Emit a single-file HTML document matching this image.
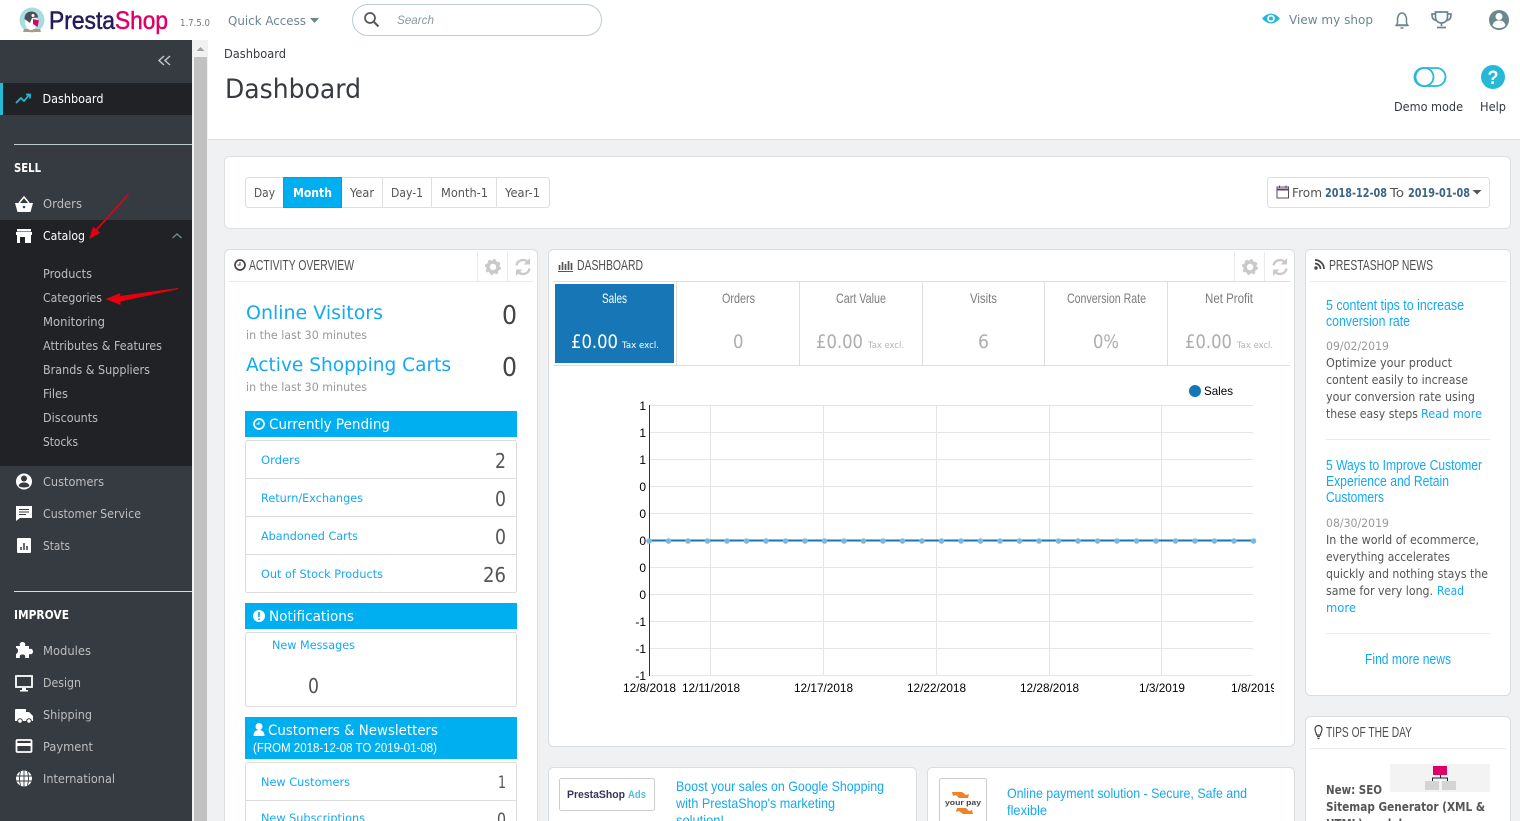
<!DOCTYPE html>
<html lang="en"><head><meta charset="utf-8"><title>Dashboard</title>
<style>
html,body{margin:0;padding:0;width:1520px;height:821px;overflow:hidden;background:#eff1f2}
svg{display:block;position:absolute;left:0;top:0}
text{white-space:pre}
.o{font-family:"DejaVu Sans",sans-serif}
.n{font-family:"Liberation Sans",sans-serif}
.s{fill:#bebebe;font-size:12px}
.w{fill:#fff;font-size:12px}
.sub{fill:#bebebe;font-size:12px}
.h{fill:#4f4f4f;font-size:15px}
.l{fill:#14a9f0}
.tl{fill:#7d7d7d;font-size:14px}
.big{fill:#aeaeae;font-size:19px}
.tx{fill:#b5b5b5;font-size:9px}
.b{fill:#555;font-size:12px}
.ax{fill:#000;font-size:12px}
</style></head><body>
<svg width="1520" height="821" viewBox="0 0 1520 821" xmlns="http://www.w3.org/2000/svg">
<rect width="1520" height="821" fill="#eff1f2"/>
<!-- top header -->
<rect width="1520" height="40" fill="#fff"/>
<circle cx="32" cy="20" r="12.500" fill="#a9dbe3"/>
<path d="M23 32l1-3h16l1 3z" fill="#a89a84"/>
<ellipse cx="31" cy="22" rx="6" ry="8" fill="#fff"/>
<path d="M24.500 19c0-5 3-7.500 7-7.500s6.500 2.500 6.500 6l-6 0.500-2 5z" fill="#4b4f58"/>
<circle cx="33" cy="15.500" r="1.500" fill="#fff"/>
<path d="M33 19l6 1.500-1.500 6.500-4.500-3z" fill="#df0067"/>
<text class="n" x="49" y="29" font-size="25" font-weight="400" fill="#251b5b" stroke="#251b5b" stroke-width=".5" textLength="66" lengthAdjust="spacingAndGlyphs">Presta</text>
<text class="n" x="115" y="29" font-size="25" font-weight="400" fill="#df0067" stroke="#df0067" stroke-width=".5" textLength="53" lengthAdjust="spacingAndGlyphs">Shop</text>
<text class="o" x="180" y="26" font-size="10" fill="#777" textLength="30" lengthAdjust="spacingAndGlyphs">1.7.5.0</text>
<text class="o" x="228" y="25" font-size="12.500" fill="#6c868e" textLength="78" lengthAdjust="spacingAndGlyphs">Quick Access</text>
<path d="M310 18h9l-4.500 5z" fill="#6c868e"/>
<rect x="352.500" y="4.500" width="249" height="31" rx="15.500" fill="#fff" stroke="#bbcdd2"/>
<circle cx="370" cy="18" r="5" fill="none" stroke="#555" stroke-width="1.700"/><path d="M374 22l4.500 4.500" stroke="#555" stroke-width="2"/>
<text class="n" x="397" y="24" font-size="12" font-style="italic" fill="#8a9aa0" textLength="37" lengthAdjust="spacingAndGlyphs">Search</text>
<path d="M1262 18.500q9-10 18 0q-9 10-18 0z" fill="#25b9d7"/><circle cx="1271" cy="18.500" r="3.800" fill="#fff"/><circle cx="1271" cy="18.500" r="2" fill="#25b9d7"/>
<text class="o" x="1289" y="24" font-size="12.500" fill="#6c868e" textLength="84" lengthAdjust="spacingAndGlyphs">View my shop</text>
<path d="M1396.500 25c1.500-1.500 1-3 1-6c0-3 2-6 4.500-6s4.500 3 4.500 6c0 3-.5 4.500 1 6z" fill="none" stroke="#6c868e" stroke-width="1.500"/><path d="M1395.500 25.500h13M1400.500 28h3" stroke="#6c868e" stroke-width="1.500"/>
<path d="M1435.500 12h12v5c0 4-3 6-6 6s-6-2-6-6zM1435.500 14h-3.500c0 4 1 6 4.500 6.500M1447.500 14h3.500c0 4-1 6-4.500 6.500M1441.500 23v3M1437 27.500h9" fill="none" stroke="#6c868e" stroke-width="1.700"/>
<circle cx="1499" cy="20" r="10" fill="#6c868e"/><circle cx="1499" cy="16.500" r="3.500" fill="#fff"/><path d="M1492.500 25.500c1-4 3.500-5 6.500-5s5.500 1 6.500 5c-3 3.500-10 3.500-13 0z" fill="#fff"/>
<!-- sidebar -->
<rect y="40" width="192" height="781" fill="#363a41"/>
<rect x="192" y="40" width="16" height="781" fill="#f1f1f1"/>
<rect x="194" y="57" width="13" height="764" fill="#c1c1c1"/>
<path d="M200.500 47l4 4h-8z" fill="#a3a3a3"/>
<path d="M164 56l-5 4.500 5 4.500M170 56l-5 4.500 5 4.500" fill="none" stroke="#bcc5c9" stroke-width="1.500"/>
<rect y="83" width="192" height="32" fill="#202226"/><rect y="83" width="3" height="32" fill="#25b9d7"/>
<path d="M16 103l5-5 3 3 5-6M26 94.500h4v4" fill="none" stroke="#25b9d7" stroke-width="1.700"/>
<text class="o w" x="42.500" y="103" textLength="61" lengthAdjust="spacingAndGlyphs">Dashboard</text>
<rect x="14" y="144" width="178" height="1" fill="#bbcdd2"/>
<text class="o" x="14" y="172" font-size="12" font-weight="700" fill="#fff" textLength="27" lengthAdjust="spacingAndGlyphs">SELL</text>
<path d="M15 203h18l-2.500 9h-13z" fill="#fff"/><path d="M19 203l5-6 5 6" fill="none" stroke="#fff" stroke-width="1.500"/><circle cx="24" cy="207" r="1.300" fill="#25488c"/>
<text class="o s" x="43" y="208" textLength="39" lengthAdjust="spacingAndGlyphs">Orders</text>
<rect y="220" width="192" height="246" fill="#202226"/>
<path d="M17 229h14v2.500H17zM16 232h16v3H16zM17 235h14v8H17z" fill="#fff"/><rect x="20" y="237" width="5" height="6" fill="#202226"/>
<text class="o w" x="43" y="240" textLength="42" lengthAdjust="spacingAndGlyphs">Catalog</text>
<path d="M172.500 238l4.500-4 4.500 4" fill="none" stroke="#6c868e" stroke-width="1.500"/>
<text class="o sub" x="43" y="278" textLength="49" lengthAdjust="spacingAndGlyphs">Products</text>
<text class="o sub" x="43" y="302" textLength="59" lengthAdjust="spacingAndGlyphs">Categories</text>
<text class="o sub" x="43" y="326" textLength="62" lengthAdjust="spacingAndGlyphs">Monitoring</text>
<text class="o sub" x="43" y="350" textLength="119" lengthAdjust="spacingAndGlyphs">Attributes &amp; Features</text>
<text class="o sub" x="43" y="374" textLength="107" lengthAdjust="spacingAndGlyphs">Brands &amp; Suppliers</text>
<text class="o sub" x="43" y="398" textLength="25" lengthAdjust="spacingAndGlyphs">Files</text>
<text class="o sub" x="43" y="422" textLength="55" lengthAdjust="spacingAndGlyphs">Discounts</text>
<text class="o sub" x="43" y="446" textLength="35" lengthAdjust="spacingAndGlyphs">Stocks</text>
<path d="M128 194L96 229l-3-2-4 12 11-6-2.500-3L129 195z" fill="#e6000f"/>
<path d="M178 288l-58 8 .5-3-15 6 15 6 0-3.500 58-12.500z" fill="#e6000f"/>
<circle cx="24" cy="481.500" r="8" fill="#fff"/><circle cx="24" cy="478.500" r="3" fill="#363a41"/><path d="M18.500 486c1-3 3-3.500 5.500-3.500s4.500.5 5.500 3.500c-2 2-9 2-11 0z" fill="#363a41"/>
<text class="o s" x="43" y="486" textLength="61" lengthAdjust="spacingAndGlyphs">Customers</text>
<path d="M16 506h16v12H20l-4 3z" fill="#fff"/><path d="M19 509.500h10M19 512h10M19 514.500h7" stroke="#363a41" stroke-width="1"/>
<text class="o s" x="43" y="518" textLength="98" lengthAdjust="spacingAndGlyphs">Customer Service</text>
<rect x="17" y="538" width="14" height="15" rx="1" fill="#fff"/><path d="M21 550v-3M24 550v-7M27 550v-4" stroke="#363a41" stroke-width="1.500"/>
<text class="o s" x="43" y="550" textLength="27" lengthAdjust="spacingAndGlyphs">Stats</text>
<rect x="14" y="591" width="178" height="1" fill="#d5dadc"/>
<text class="o" x="14" y="619" font-size="12" font-weight="700" fill="#fff" textLength="55" lengthAdjust="spacingAndGlyphs">IMPROVE</text>
<path d="M16 646h4c-1-3 1-4 2.500-4s3.500 1 2.500 4h4v3c3-1 4 1 4 2.500s-1 3.500-4 2.500v4h-4c1-3-1-3.500-2.500-3.500s-3.500.5-2.500 3.500h-4v-4c2-1 2-2.500 2-3s0-3-2-3z" fill="#fff"/>
<text class="o s" x="43" y="655" textLength="48" lengthAdjust="spacingAndGlyphs">Modules</text>
<rect x="16" y="676" width="16" height="11" fill="#363a41" stroke="#fff" stroke-width="1.800"/><path d="M22 688h4v2h2v1.500h-8V690h2z" fill="#fff"/>
<text class="o s" x="43" y="687" textLength="38" lengthAdjust="spacingAndGlyphs">Design</text>
<path d="M15 710q0-1 1-1h10v3h3l4 4v5H15z" fill="#fff"/><circle cx="20" cy="721" r="2.300" fill="#fff" stroke="#363a41"/><circle cx="29" cy="721" r="2.300" fill="#fff" stroke="#363a41"/>
<text class="o s" x="43" y="719" textLength="49" lengthAdjust="spacingAndGlyphs">Shipping</text>
<rect x="16.500" y="740" width="15" height="12" rx="1" fill="#363a41" stroke="#fff" stroke-width="1.800"/><rect x="16" y="743" width="16" height="3" fill="#fff"/>
<text class="o s" x="43" y="751" textLength="50" lengthAdjust="spacingAndGlyphs">Payment</text>
<circle cx="24" cy="778.500" r="8" fill="#fff"/><path d="M16 776h16M16 781h16M24 770.500v16M20.500 771.500q-2 7 0 14M27.500 771.500q2 7 0 14" fill="none" stroke="#363a41" stroke-width=".9"/>
<text class="o s" x="43" y="783" textLength="72" lengthAdjust="spacingAndGlyphs">International</text>
<!-- page head -->
<rect x="208" y="40" width="1312" height="99" fill="#fff"/><rect x="208" y="139" width="1312" height="1" fill="#dcdfe1"/>
<text class="o" x="224" y="58" font-size="12" fill="#363a41" textLength="62" lengthAdjust="spacingAndGlyphs">Dashboard</text>
<text class="o" x="225" y="98" font-size="27" fill="#363a41" textLength="136" lengthAdjust="spacingAndGlyphs">Dashboard</text>
<rect x="1414.500" y="68" width="31" height="18" rx="9" fill="none" stroke="#25b9d7" stroke-width="1.800"/><circle cx="1424.500" cy="77" r="9" fill="#fff" stroke="#25b9d7" stroke-width="1.800"/>
<text class="o" x="1394" y="111" font-size="12" fill="#363a41" textLength="69" lengthAdjust="spacingAndGlyphs">Demo mode</text>
<circle cx="1493" cy="77" r="12" fill="#25b9d7"/>
<text class="n" x="1487.500" y="84" font-size="19" font-weight="700" fill="#fff" textLength="11" lengthAdjust="spacingAndGlyphs">?</text>
<text class="o" x="1480" y="111" font-size="12" fill="#363a41" textLength="26" lengthAdjust="spacingAndGlyphs">Help</text>
<!-- calendar bar -->
<rect x="224.500" y="156.500" width="1286" height="72" rx="5" fill="#fff" stroke="#dbe0e3"/>
<rect x="245.500" y="177.500" width="304" height="30" rx="3" fill="#fff" stroke="#dcdfe1"/>
<path d="M382.500 178v29M431.500 178v29M496.500 178v29" stroke="#dcdfe1"/>
<rect x="283.500" y="177.500" width="58" height="30" fill="#00aff0" stroke="#0d9ccf"/>
<text class="o" x="254" y="197" font-size="12" fill="#555" textLength="21" lengthAdjust="spacingAndGlyphs">Day</text>
<text class="o" x="293" y="197" font-size="12" font-weight="700" fill="#fff" textLength="39" lengthAdjust="spacingAndGlyphs">Month</text>
<text class="o" x="350" y="197" font-size="12" fill="#555" textLength="24" lengthAdjust="spacingAndGlyphs">Year</text>
<text class="o" x="391" y="197" font-size="12" fill="#555" textLength="32" lengthAdjust="spacingAndGlyphs">Day-1</text>
<text class="o" x="441" y="197" font-size="12" fill="#555" textLength="47" lengthAdjust="spacingAndGlyphs">Month-1</text>
<text class="o" x="505" y="197" font-size="12" fill="#555" textLength="35" lengthAdjust="spacingAndGlyphs">Year-1</text>
<rect x="1267.500" y="177.500" width="222" height="30" rx="3" fill="#fff" stroke="#dcdfe1"/>
<rect x="1277" y="187" width="11.500" height="11" fill="#fff" stroke="#5b4468"/><path d="M1277 189.500h11.500" stroke="#5b4468" stroke-width="2"/><path d="M1279.500 185.500v2.500M1286 185.500v2.500" stroke="#5b4468"/>
<text class="o" x="1292" y="197" font-size="12" fill="#555" textLength="30" lengthAdjust="spacingAndGlyphs">From</text>
<text class="o" x="1325" y="197" font-size="12" font-weight="700" fill="#3a6585" textLength="62" lengthAdjust="spacingAndGlyphs">2018-12-08</text>
<text class="o" x="1390" y="197" font-size="12" fill="#555" textLength="14" lengthAdjust="spacingAndGlyphs">To</text>
<text class="o" x="1408" y="197" font-size="12" font-weight="700" fill="#3a6585" textLength="62" lengthAdjust="spacingAndGlyphs">2019-01-08</text>
<path d="M1472.500 190h9l-4.500 4.500z" fill="#555"/>
<!-- activity panel -->
<rect x="224.500" y="249.500" width="313" height="600" rx="5" fill="#fff" stroke="#d9dee1"/>
<path d="M229 281.500h304M477.500 252v29M507.500 252v29" stroke="#eaeaea"/>
<circle cx="240" cy="265" r="5" fill="none" stroke="#444" stroke-width="1.700"/><path d="M240 262v3h-2.500" fill="none" stroke="#444"/>
<text class="n h" x="249" y="270" textLength="105" lengthAdjust="spacingAndGlyphs">ACTIVITY OVERVIEW</text>
<circle cx="493" cy="267" r="5" fill="none" stroke="#c9c9c9" stroke-width="3.500"/><circle cx="493" cy="267" r="7" fill="none" stroke="#c9c9c9" stroke-width="2" stroke-dasharray="2.800 2.700"/>
<path d="M516.500 265.500a6.500 6.500 0 0 1 11.500-3M529.500 268.500a6.500 6.500 0 0 1-11.500 3" fill="none" stroke="#c9c9c9" stroke-width="2.300"/><path d="M530 258v6.500h-6.500zM516 276v-6.500h6.500z" fill="#c9c9c9"/>
<text class="o l" x="246" y="319" font-size="19" textLength="137" lengthAdjust="spacingAndGlyphs">Online Visitors</text>
<text class="o" x="502" y="324" font-size="26" fill="#444" textLength="15" lengthAdjust="spacingAndGlyphs">0</text>
<text class="o" x="246" y="339" font-size="11.500" fill="#999" textLength="121" lengthAdjust="spacingAndGlyphs">in the last 30 minutes</text>
<text class="o l" x="246" y="371" font-size="19" textLength="205" lengthAdjust="spacingAndGlyphs">Active Shopping Carts</text>
<text class="o" x="502" y="376" font-size="26" fill="#444" textLength="15" lengthAdjust="spacingAndGlyphs">0</text>
<text class="o" x="246" y="391" font-size="11.500" fill="#999" textLength="121" lengthAdjust="spacingAndGlyphs">in the last 30 minutes</text>
<rect x="245" y="411" width="272" height="26" fill="#00aff0"/>
<circle cx="259" cy="424" r="5" fill="none" stroke="#fff" stroke-width="1.700"/><path d="M259 421.500v2.500h-2.500" fill="none" stroke="#fff"/>
<text class="o" x="269" y="429" font-size="14.500" fill="#fff" textLength="121" lengthAdjust="spacingAndGlyphs">Currently Pending</text>
<rect x="245.500" y="440.500" width="271" height="152" rx="2" fill="#fff" stroke="#dcdcdc"/>
<path d="M246 478.500h270M246 516.500h270M246 554.500h270" stroke="#dcdcdc"/>
<text class="o l" x="261" y="464" font-size="11.500" textLength="39" lengthAdjust="spacingAndGlyphs">Orders</text>
<text class="o" x="495" y="468" font-size="20" fill="#555" textLength="11" lengthAdjust="spacingAndGlyphs">2</text>
<text class="o l" x="261" y="502" font-size="11.500" textLength="102" lengthAdjust="spacingAndGlyphs">Return/Exchanges</text>
<text class="o" x="495" y="506" font-size="20" fill="#555" textLength="11" lengthAdjust="spacingAndGlyphs">0</text>
<text class="o l" x="261" y="540" font-size="11.500" textLength="97" lengthAdjust="spacingAndGlyphs">Abandoned Carts</text>
<text class="o" x="495" y="544" font-size="20" fill="#555" textLength="11" lengthAdjust="spacingAndGlyphs">0</text>
<text class="o l" x="261" y="578" font-size="11.500" textLength="122" lengthAdjust="spacingAndGlyphs">Out of Stock Products</text>
<text class="o" x="483" y="582" font-size="20" fill="#555" textLength="23" lengthAdjust="spacingAndGlyphs">26</text>
<rect x="245" y="603" width="272" height="26" fill="#00aff0"/>
<circle cx="259" cy="616" r="6" fill="#fff"/><path d="M259 612v5M259 618.500v1.500" stroke="#00aff0" stroke-width="1.700"/>
<text class="o" x="269" y="621" font-size="14.500" fill="#fff" textLength="85" lengthAdjust="spacingAndGlyphs">Notifications</text>
<rect x="245.500" y="632.500" width="271" height="74" rx="2" fill="#fff" stroke="#dcdcdc"/>
<text class="o l" x="272" y="649" font-size="11.500" textLength="83" lengthAdjust="spacingAndGlyphs">New Messages</text>
<text class="o" x="308" y="693" font-size="20" fill="#555" textLength="11" lengthAdjust="spacingAndGlyphs">0</text>
<rect x="245" y="717" width="272" height="42" fill="#00aff0"/>
<circle cx="259" cy="726.500" r="3.500" fill="#fff"/><path d="M253.500 736c0-4 2-6 5.500-6s5.500 2 5.500 6z" fill="#fff"/>
<text class="o" x="268" y="735" font-size="14.500" fill="#fff" textLength="170" lengthAdjust="spacingAndGlyphs">Customers &amp; Newsletters</text>
<text class="n" x="253" y="752" font-size="13" fill="#fff" textLength="184" lengthAdjust="spacingAndGlyphs">(FROM 2018-12-08 TO 2019-01-08)</text>
<rect x="245.500" y="762.500" width="271" height="80" rx="2" fill="#fff" stroke="#dcdcdc"/>
<path d="M246 800.500h270" stroke="#dcdcdc"/>
<text class="o l" x="261" y="786" font-size="11.500" textLength="89" lengthAdjust="spacingAndGlyphs">New Customers</text>
<text class="o" x="498" y="788" font-size="17" fill="#555" textLength="8" lengthAdjust="spacingAndGlyphs">1</text>
<text class="o l" x="261" y="822" font-size="11.500" textLength="104" lengthAdjust="spacingAndGlyphs">New Subscriptions</text>
<text class="o" x="497" y="825" font-size="17" fill="#555" textLength="9" lengthAdjust="spacingAndGlyphs">0</text>
<!-- dashboard panel -->
<rect x="548.500" y="249.500" width="746" height="497" rx="5" fill="#fff" stroke="#d9dee1"/>
<path d="M558 271.500h15" stroke="#555"/><path d="M559.500 270v-5M562.500 270v-8M565.500 270v-6M568.500 270v-9M571.500 270v-7" stroke="#555" stroke-width="1.700"/>
<text class="n h" x="577" y="270" textLength="66" lengthAdjust="spacingAndGlyphs">DASHBOARD</text>
<path d="M1234.500 252v29M1264.500 252v29" stroke="#eaeaea"/>
<circle cx="1250" cy="267" r="5" fill="none" stroke="#c9c9c9" stroke-width="3.500"/><circle cx="1250" cy="267" r="7" fill="none" stroke="#c9c9c9" stroke-width="2" stroke-dasharray="2.800 2.700"/>
<path d="M1273.500 265.500a6.500 6.500 0 0 1 11.500-3M1286.500 268.500a6.500 6.500 0 0 1-11.500 3" fill="none" stroke="#c9c9c9" stroke-width="2.300"/><path d="M1287 258v6.500h-6.500zM1273 276v-6.500h6.500z" fill="#c9c9c9"/>
<path d="M553 281.500h737M553 365.500h737M676.500 282v83M799.500 282v83M922.500 282v83M1044.500 282v83M1167.500 282v83" stroke="#dedede"/>
<rect x="555" y="284" width="119" height="79" fill="#1777b6"/>
<text class="n" x="602" y="303" font-size="14" fill="#fff" textLength="25" lengthAdjust="spacingAndGlyphs">Sales</text>
<text class="o" x="571" y="348" font-size="19" fill="#fff" textLength="47" lengthAdjust="spacingAndGlyphs">£0.00</text>
<text class="o" x="622" y="348" font-size="9" fill="#fff" textLength="37" lengthAdjust="spacingAndGlyphs">Tax excl.</text>
<text class="n tl" x="722" y="303" textLength="33" lengthAdjust="spacingAndGlyphs">Orders</text>
<text class="o big" x="733" y="348" textLength="10.500" lengthAdjust="spacingAndGlyphs">0</text>
<text class="n tl" x="836" y="303" textLength="50" lengthAdjust="spacingAndGlyphs">Cart Value</text>
<text class="o big" x="816" y="348" textLength="47" lengthAdjust="spacingAndGlyphs">£0.00</text>
<text class="o tx" x="868" y="348" textLength="36" lengthAdjust="spacingAndGlyphs">Tax excl.</text>
<text class="n tl" x="970" y="303" textLength="27" lengthAdjust="spacingAndGlyphs">Visits</text>
<text class="o big" x="978" y="348" textLength="11" lengthAdjust="spacingAndGlyphs">6</text>
<text class="n tl" x="1067" y="303" textLength="79" lengthAdjust="spacingAndGlyphs">Conversion Rate</text>
<text class="o big" x="1093" y="348" textLength="26" lengthAdjust="spacingAndGlyphs">0%</text>
<text class="n tl" x="1205" y="303" textLength="48" lengthAdjust="spacingAndGlyphs">Net Profit</text>
<text class="o big" x="1185" y="348" textLength="47" lengthAdjust="spacingAndGlyphs">£0.00</text>
<text class="o tx" x="1237" y="348" textLength="36" lengthAdjust="spacingAndGlyphs">Tax excl.</text>
<circle cx="1195" cy="391" r="6" fill="#1777b6"/>
<text class="n" x="1204" y="395" font-size="12" fill="#000" textLength="29" lengthAdjust="spacingAndGlyphs">Sales</text>
<!-- chart -->
<path d="M650 405.500h603M650 432.500h603M650 459.500h603M650 486.500h603M650 513.500h603M650 567.500h603M650 594.500h603M650 621.500h603M650 648.500h603M650 675.500h603M710.500 405v271M823.500 405v271M936.500 405v271M1049.500 405v271M1161.500 405v271" stroke="#e5e5e5"/>
<path d="M649.500 405v271" stroke="#333"/>
<path d="M650 540.500H1253" stroke="#1777b6" stroke-width="2"/>
<g fill="#7fb6dc">
<circle cx="649" cy="541" r="2.800"/><circle cx="668.500" cy="541" r="2.800"/><circle cx="688" cy="541" r="2.800"/><circle cx="707.500" cy="541" r="2.800"/><circle cx="727" cy="541" r="2.800"/><circle cx="746.500" cy="541" r="2.800"/><circle cx="766" cy="541" r="2.800"/><circle cx="785.500" cy="541" r="2.800"/><circle cx="805" cy="541" r="2.800"/><circle cx="824.500" cy="541" r="2.800"/><circle cx="844" cy="541" r="2.800"/><circle cx="863.500" cy="541" r="2.800"/><circle cx="883" cy="541" r="2.800"/><circle cx="902.500" cy="541" r="2.800"/><circle cx="922" cy="541" r="2.800"/><circle cx="941.500" cy="541" r="2.800"/><circle cx="961" cy="541" r="2.800"/><circle cx="980.500" cy="541" r="2.800"/><circle cx="1000" cy="541" r="2.800"/><circle cx="1019.500" cy="541" r="2.800"/><circle cx="1039" cy="541" r="2.800"/><circle cx="1058.500" cy="541" r="2.800"/><circle cx="1078" cy="541" r="2.800"/><circle cx="1097.500" cy="541" r="2.800"/><circle cx="1117" cy="541" r="2.800"/><circle cx="1136.500" cy="541" r="2.800"/><circle cx="1156" cy="541" r="2.800"/><circle cx="1175.500" cy="541" r="2.800"/><circle cx="1195" cy="541" r="2.800"/><circle cx="1214.500" cy="541" r="2.800"/><circle cx="1234" cy="541" r="2.800"/><circle cx="1253.500" cy="541" r="2.800"/>
</g>
<g text-anchor="end" font-size="12" fill="#000" font-family="Liberation Sans">
<text x="646" y="410">1</text><text x="646" y="437">1</text><text x="646" y="464">1</text><text x="646" y="491">0</text><text x="646" y="518">0</text><text x="646" y="545">0</text><text x="646" y="572">0</text><text x="646" y="599">0</text><text x="646" y="626">-1</text><text x="646" y="653">-1</text><text x="646" y="680">-1</text>
</g>
<text class="n ax" x="623" y="692" textLength="53" lengthAdjust="spacingAndGlyphs">12/8/2018</text>
<text class="n ax" x="682" y="692" textLength="58" lengthAdjust="spacingAndGlyphs">12/11/2018</text>
<text class="n ax" x="794" y="692" textLength="59" lengthAdjust="spacingAndGlyphs">12/17/2018</text>
<text class="n ax" x="907" y="692" textLength="59" lengthAdjust="spacingAndGlyphs">12/22/2018</text>
<text class="n ax" x="1020" y="692" textLength="59" lengthAdjust="spacingAndGlyphs">12/28/2018</text>
<text class="n ax" x="1139" y="692" textLength="46" lengthAdjust="spacingAndGlyphs">1/3/2019</text>
<text class="n ax" x="1231" y="692" textLength="46" lengthAdjust="spacingAndGlyphs">1/8/2019</text>
<rect x="1274" y="680" width="10" height="16" fill="#fff"/>
<!-- bottom partner panels -->
<rect x="548.500" y="767.500" width="368" height="80" rx="5" fill="#fff" stroke="#d9dee1"/>
<rect x="559.500" y="778.500" width="95" height="32" rx="2" fill="#fff" stroke="#ccc"/>
<text class="n" x="567" y="798" font-size="11" font-weight="700" fill="#3a3557" textLength="58" lengthAdjust="spacingAndGlyphs">PrestaShop</text>
<text class="n" x="628" y="798" font-size="11" font-weight="700" fill="#4fc0d5" textLength="18" lengthAdjust="spacingAndGlyphs">Ads</text>
<text class="n l" x="676" y="791" font-size="14" textLength="208" lengthAdjust="spacingAndGlyphs">Boost your sales on Google Shopping</text>
<text class="n l" x="676" y="808" font-size="14" textLength="159" lengthAdjust="spacingAndGlyphs">with PrestaShop's marketing</text>
<text class="n l" x="676" y="825" font-size="14" textLength="48" lengthAdjust="spacingAndGlyphs">solution!</text>
<rect x="927.500" y="767.500" width="367" height="80" rx="5" fill="#fff" stroke="#d9dee1"/>
<rect x="939.500" y="778.500" width="47" height="60" rx="2" fill="#fff" stroke="#ccc"/>
<path d="M952 792h10l4 3 3-1-1 4h-9l-3-3-3 1zM973 814h-10l-4-3-3 1 1-4h9l3 3 3-1z" fill="#f08223"/>
<text class="n" x="945" y="805" font-size="7.500" font-weight="700" fill="#444" textLength="36" lengthAdjust="spacingAndGlyphs">your pay</text>
<text class="n l" x="1007" y="798" font-size="14" textLength="240" lengthAdjust="spacingAndGlyphs">Online payment solution - Secure, Safe and</text>
<text class="n l" x="1007" y="815" font-size="14" textLength="40" lengthAdjust="spacingAndGlyphs">flexible</text>
<!-- news -->
<rect x="1305.500" y="249.500" width="205" height="446" rx="5" fill="#fff" stroke="#d9dee1"/>
<path d="M1310 281.500h196" stroke="#eaeaea"/>
<circle cx="1316" cy="268" r="1.700" fill="#444"/><path d="M1315 263.500a5.500 5.500 0 0 1 5.500 5.500M1315 260a9 9 0 0 1 9 9" fill="none" stroke="#444" stroke-width="1.700"/>
<text class="n h" x="1329" y="270" textLength="104" lengthAdjust="spacingAndGlyphs">PRESTASHOP NEWS</text>
<text class="n l" x="1326" y="310" font-size="15" textLength="138" lengthAdjust="spacingAndGlyphs">5 content tips to increase</text>
<text class="n l" x="1326" y="326" font-size="15" textLength="84" lengthAdjust="spacingAndGlyphs">conversion rate</text>
<text class="o" x="1326" y="350" font-size="11.500" fill="#999" textLength="63" lengthAdjust="spacingAndGlyphs">09/02/2019</text>
<text class="o b" x="1326" y="367" textLength="126" lengthAdjust="spacingAndGlyphs">Optimize your product</text>
<text class="o b" x="1326" y="384" textLength="142" lengthAdjust="spacingAndGlyphs">content easily to increase</text>
<text class="o b" x="1326" y="401" textLength="149" lengthAdjust="spacingAndGlyphs">your conversion rate using</text>
<text class="o b" x="1326" y="418" textLength="92" lengthAdjust="spacingAndGlyphs">these easy steps</text>
<text class="o l" x="1421" y="418" font-size="12" textLength="61" lengthAdjust="spacingAndGlyphs">Read more</text>
<path d="M1326 439.500h164" stroke="#eaeaea"/>
<text class="n l" x="1326" y="470" font-size="15" textLength="156" lengthAdjust="spacingAndGlyphs">5 Ways to Improve Customer</text>
<text class="n l" x="1326" y="486" font-size="15" textLength="123" lengthAdjust="spacingAndGlyphs">Experience and Retain</text>
<text class="n l" x="1326" y="502" font-size="15" textLength="58" lengthAdjust="spacingAndGlyphs">Customers</text>
<text class="o" x="1326" y="527" font-size="11.500" fill="#999" textLength="63" lengthAdjust="spacingAndGlyphs">08/30/2019</text>
<text class="o b" x="1326" y="544" textLength="153" lengthAdjust="spacingAndGlyphs">In the world of ecommerce,</text>
<text class="o b" x="1326" y="561" textLength="124" lengthAdjust="spacingAndGlyphs">everything accelerates</text>
<text class="o b" x="1326" y="578" textLength="162" lengthAdjust="spacingAndGlyphs">quickly and nothing stays the</text>
<text class="o b" x="1326" y="595" textLength="107" lengthAdjust="spacingAndGlyphs">same for very long.</text>
<text class="o l" x="1437" y="595" font-size="12" textLength="27" lengthAdjust="spacingAndGlyphs">Read</text>
<text class="o l" x="1326" y="612" font-size="12" textLength="30" lengthAdjust="spacingAndGlyphs">more</text>
<path d="M1326 633.500h164" stroke="#eaeaea"/>
<text class="n l" x="1365" y="664" font-size="15" textLength="86" lengthAdjust="spacingAndGlyphs">Find more news</text>
<!-- tips -->
<rect x="1305.500" y="716.500" width="205" height="140" rx="5" fill="#fff" stroke="#d9dee1"/>
<path d="M1310 748.500h196" stroke="#eaeaea"/>
<path d="M1316.500 735c0-3-1.500-3-1.500-6a3.500 3.500 0 0 1 7 0c0 3-1.500 3-1.500 6z" fill="none" stroke="#444" stroke-width="1.200"/><path d="M1317 736.500h3M1317.500 738.500h2" stroke="#444" stroke-width="1.200"/>
<text class="n h" x="1326" y="737" textLength="86" lengthAdjust="spacingAndGlyphs">TIPS OF THE DAY</text>
<rect x="1390" y="764" width="100" height="28" fill="#f3f3f3"/>
<rect x="1433" y="766" width="14" height="9" fill="#df0067"/>
<path d="M1440.500 775v3M1432.500 781v-3h15v3" fill="none" stroke="#222"/>
<rect x="1425" y="781" width="14" height="9" fill="#d4d4d4"/><rect x="1442" y="781" width="14" height="9" fill="#d4d4d4"/>
<text class="o" x="1326" y="794" font-size="12.500" font-weight="700" fill="#555" textLength="56" lengthAdjust="spacingAndGlyphs">New: SEO</text>
<text class="o" x="1326" y="811" font-size="12.500" font-weight="700" fill="#555" textLength="159" lengthAdjust="spacingAndGlyphs">Sitemap Generator (XML &amp;</text>
<text class="o" x="1326" y="828" font-size="12.500" font-weight="700" fill="#555" textLength="83" lengthAdjust="spacingAndGlyphs">HTML) module</text>
</svg>
</body></html>
